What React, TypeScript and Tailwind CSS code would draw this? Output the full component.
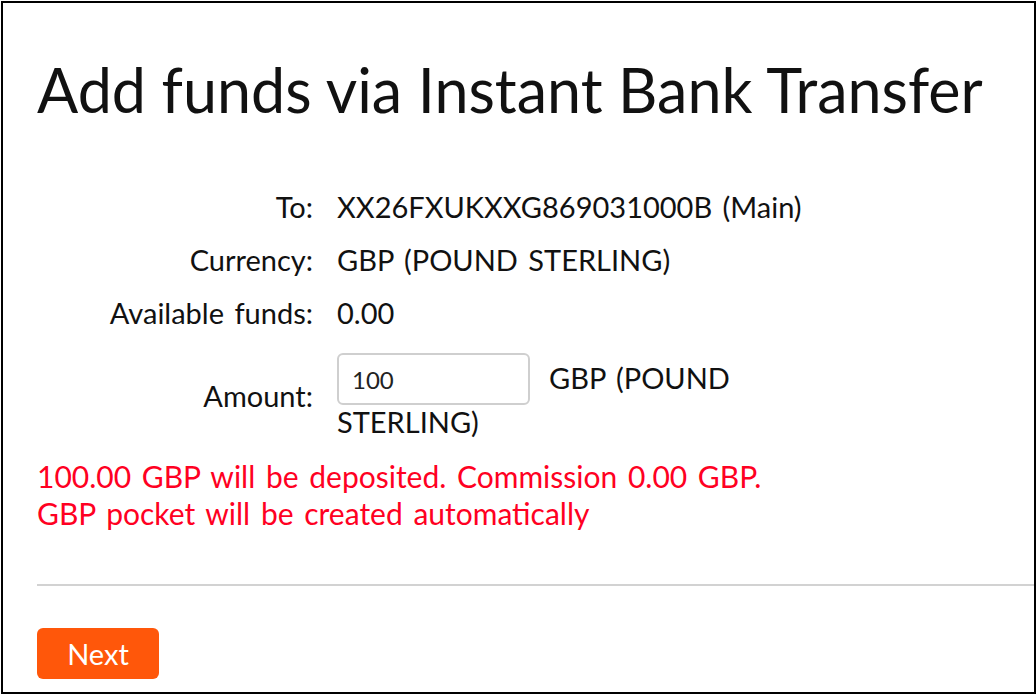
import { useState } from "react";

const FONT = { fontFamily: "Lato, 'Open Sans', Arial, sans-serif" };

const rows = [
  { label: "To:", value: "XX26FXUKXXG869031000B (Main)" },
  { label: "Currency:", value: "GBP (POUND STERLING)" },
  { label: "Available funds:", value: "0.00" },
];

export default function App() {
  const [amount, setAmount] = useState("100");

  return (
    <div className="h-[696px] w-[1036px] bg-white pt-px pl-px" style={FONT}>
      <div className="flex h-[693px] w-[1035px] flex-col border-2 border-black pl-[34px] text-[#111]">
        {/* Title */}
        <h1 className="mt-[52px] text-[61px] leading-[70px] font-normal">
          Add funds via Instant Bank Transfer
        </h1>

        {/* Details */}
        <div className="mt-[55px] grid grid-cols-[276px_1fr] gap-x-[24px] text-[29px] leading-[33px] [word-spacing:3px]">
          {rows.map((r) => (
            <div key={r.label} className="contents">
              <div className="py-[10px] text-right">{r.label}</div>
              <div className="py-[10px] whitespace-nowrap">{r.value}</div>
            </div>
          ))}

          <div className="flex items-center justify-end pt-[14px] text-right">Amount:</div>
          <div className="max-w-[420px] pt-[14px]">
            <input
              value={amount}
              onChange={(e) => setAmount(e.target.value)}
              className="inline-block h-[52px] w-[193px] rounded-[6px] border-2 border-[#cfcfcf] px-[13px] align-baseline text-[24px] text-[#222] outline-none"
              style={FONT}
            />
            <span className="ml-[19px]">GBP (POUND STERLING)</span>
          </div>
        </div>

        {/* Notice */}
        <div className="mt-[20px] text-[30px] leading-[37px] text-[#ff0022] [word-spacing:3px]">
          <p>100.00 GBP will be deposited. Commission 0.00 GBP.</p>
          <p>GBP pocket will be created automatically</p>
        </div>

        <div className="mt-[52px] h-[2px] bg-[#d2d2d2]" />

        <div className="mt-[42px]">
          <button className="h-[51px] w-[122px] rounded-[6px] bg-[#ff570a] text-[29px] text-white">
            Next
          </button>
        </div>
      </div>
    </div>
  );
}
